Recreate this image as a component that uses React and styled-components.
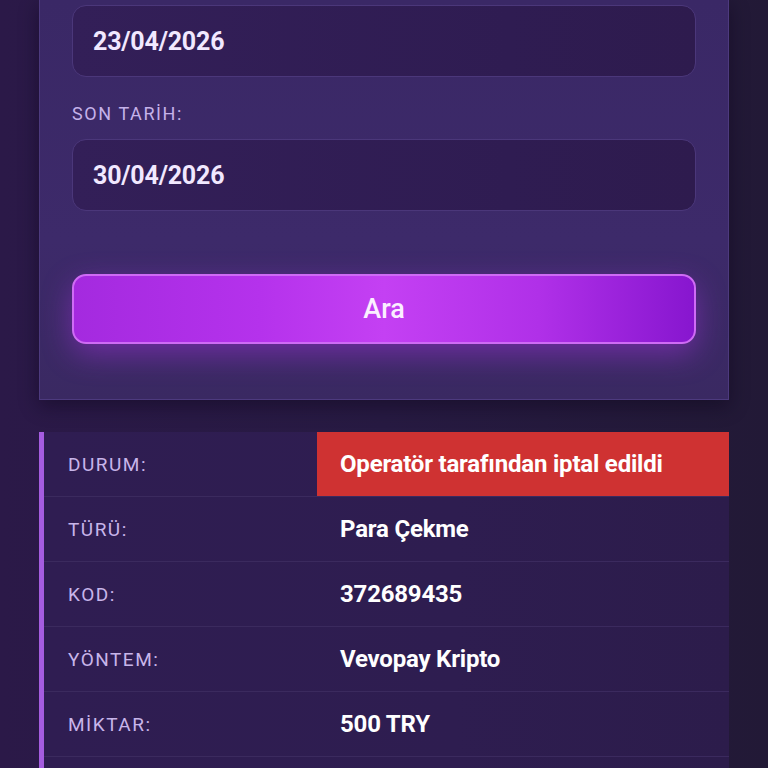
import React from 'react'
import styled, { createGlobalStyle } from 'styled-components'

const GlobalStyle = createGlobalStyle`
  html, body {
    margin: 0;
    padding: 0;
    background: #241a3a;
  }
  body {
    font-family: Roboto, "Noto Sans", "Liberation Sans", sans-serif;
  }
`

const Page = styled.div`
  height: 768px;
  padding: 0 39px;
  background: linear-gradient(90deg, #2b1948 0%, #271a42 50%, #221936 100%);
  display: flex;
  flex-direction: column;
  gap: 32px;
  overflow: hidden;
`

const Card = styled.section`
  background: linear-gradient(180deg, #3a2866 0%, #3d2a6a 60%, #3a2962 100%);
  border: 1px solid #4d3a7e;
  border-top: none;
  padding: 5px 32px 55px 32px;
  display: flex;
  flex-direction: column;
  box-shadow: 0 6px 18px rgba(10, 4, 24, 0.45);
`

const Field = styled.div`
  height: 70px;
  border-radius: 14px;
  border: 1px solid #4b377a;
  background: linear-gradient(90deg, #331f58 0%, #2f1c52 70%, #2e1b4e 100%);
  display: flex;
  align-items: center;
  padding: 0 20px;
  color: #f1e8ff;
  font-size: 25px;
  font-weight: 700;
  letter-spacing: -0.2px;
`

const Label = styled.div`
  margin: ${(p) => p.$top || 0}px 0 15px 0;
  color: #c5b2ea;
  font-size: 18px;
  letter-spacing: 1.6px;
  line-height: 20px;
`

const Button = styled.button`
  margin-top: ${(p) => p.$top}px;
  height: 70px;
  border-radius: 14px;
  border: 2px solid #cf6bf5;
  background: linear-gradient(90deg, #a42adf 0%, #b532ec 30%, #c440f3 50%, #b030e8 75%, #8716cf 100%);
  color: #fbefff;
  font-family: inherit;
  font-size: 27px;
  font-weight: 500;
  box-shadow: 0 10px 30px rgba(176, 52, 236, 0.45);
  cursor: pointer;
`

const Table = styled.div`
  flex: 1;
  background: linear-gradient(90deg, #2f1d52 0%, #2e1d50 60%, #2c1c4b 100%);
  border-left: 5px solid #a55ce0;
  display: flex;
  flex-direction: column;
`

const Row = styled.div`
  display: grid;
  grid-template-columns: 273px 1fr;
  height: 64px;
  border-bottom: 1px solid #3b2a5e;
`

const Key = styled.div`
  display: flex;
  align-items: center;
  padding-left: 24px;
  color: #c8b5ea;
  font-size: 19px;
  letter-spacing: 1.5px;
`

const Value = styled.div`
  display: flex;
  align-items: center;
  padding-left: 23px;
  color: #ffffff;
  font-size: 24px;
  font-weight: 700;
  letter-spacing: -0.2px;
  background: ${(p) => (p.$alert ? '#cf3232' : 'transparent')};
`

const rows = [
  { key: 'DURUM:', value: 'Operatör tarafından iptal edildi', alert: true },
  { key: 'TÜRÜ:', value: 'Para Çekme' },
  { key: 'KOD:', value: '372689435' },
  { key: 'YÖNTEM:', value: 'Vevopay Kripto' },
  { key: 'MİKTAR:', value: '500 TRY' },
]

export default function App() {
  return (
    <>
      <GlobalStyle />
      <Page>
        <Card>
          <Field>23/04/2026</Field>
          <Label $top={27}>SON TARİH:</Label>
          <Field>30/04/2026</Field>
          <Button $top={63}>Ara</Button>
        </Card>
        <Table>
          {rows.map((r) => (
            <Row key={r.key}>
              <Key>{r.key}</Key>
              <Value $alert={r.alert}>{r.value}</Value>
            </Row>
          ))}
        </Table>
      </Page>
    </>
  )
}
